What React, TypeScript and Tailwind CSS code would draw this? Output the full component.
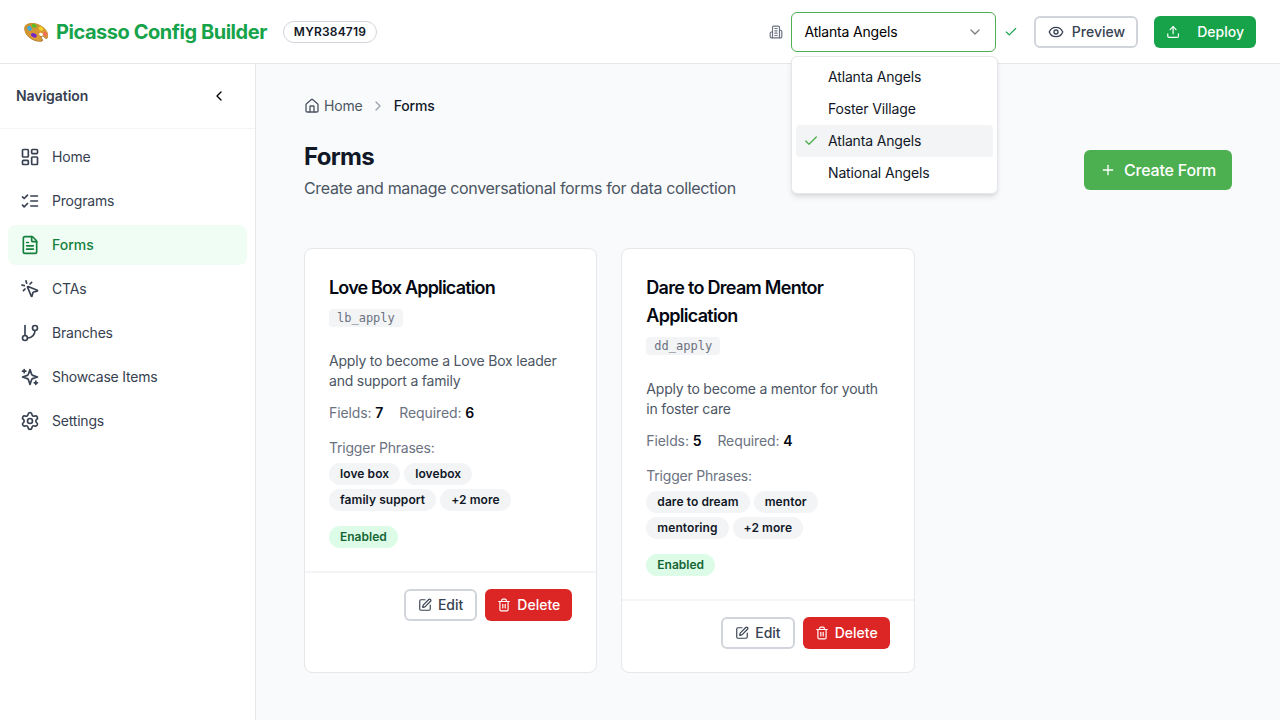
import React from "react";
import { Check, ChevronDown, ChevronLeft, ChevronRight, Eye, FileText, House, LayoutDashboard, MousePointerClick, Plus, Settings, SquarePen, Trash2, Upload } from "lucide-react";

type IconProps = { className?: string };

function Glyph({ className, children }: { className?: string; children: React.ReactNode }) {
  return (
    <svg viewBox="0 0 24 24" fill="none" stroke="currentColor" strokeWidth="2" strokeLinecap="round" strokeLinejoin="round" className={className}>
      {children}
    </svg>
  );
}

const Building = ({ className }: IconProps) => (
  <Glyph className={className}>
    <path d="M6 22V4a2 2 0 0 1 2-2h8a2 2 0 0 1 2 2v18Z" />
    <path d="M6 12H4a2 2 0 0 0-2 2v6a2 2 0 0 0 2 2h2" />
    <path d="M18 9h2a2 2 0 0 1 2 2v9a2 2 0 0 1-2 2h-2" />
    <path d="M10 6h4M10 10h4M10 14h4M10 18h4" />
  </Glyph>
);

const Checklist = ({ className }: IconProps) => (
  <Glyph className={className}>
    <path d="m3 17 2 2 4-4" />
    <path d="m3 7 2 2 4-4" />
    <path d="M13 6h8M13 12h8M13 18h8" />
  </Glyph>
);

const Branch = ({ className }: IconProps) => (
  <Glyph className={className}>
    <path d="M6 3v12" />
    <circle cx="18" cy="6" r="3" />
    <circle cx="6" cy="18" r="3" />
    <path d="M18 9a9 9 0 0 1-9 9" />
  </Glyph>
);

const Sparkles = ({ className }: IconProps) => (
  <Glyph className={className}>
    <path d="m12 3-1.912 5.813a2 2 0 0 1-1.275 1.275L3 12l5.813 1.912a2 2 0 0 1 1.275 1.275L12 21l1.912-5.813a2 2 0 0 1 1.275-1.275L21 12l-5.813-1.912a2 2 0 0 1-1.275-1.275L12 3Z" />
    <path d="M5 3v4M19 17v4M3 5h4M17 19h4" />
  </Glyph>
);

const Palette = () => (
  <svg viewBox="0 0 25 21" className="mt-px h-[21px] w-[25px]">
    <defs>
      <linearGradient id="wood" x1="0" y1="0" x2="0.6" y2="1">
        <stop offset="0" stopColor="#c98d2c" />
        <stop offset="1" stopColor="#dd9f38" />
      </linearGradient>
    </defs>
    <path d="M.4 6.500C.7 2.900 4.500 1.200 9 1.500c6.500.4 12.900 4.800 14.700 10 .9 2.900.2 5.500-1.600 5.300-1.500-.2-1.700-2.100-3.300-2.300-1.500-.1-1.300 1.400-.3 2.500 1.200 1.500.1 2.800-2.300 2.800C8.800 19.800 0 13.400.4 6.500Z" fill="#a5702b" />
    <path d="M.4 6C.7 2.400 4.500.7 9 1c6.500.4 12.900 4.800 14.700 9.800.9 2.900.2 5.300-1.600 5.100-1.700-.2-2.200-2.600-4.200-2.700-1.900 0-1.700 2-.4 3.400 1.200 1.400.1 2.400-1.800 2.400C8.800 19 0 12.900.4 6Z" fill="url(#wood)" />
    <ellipse cx="17" cy="12.400" rx="2" ry="1.500" transform="rotate(30 17 12.400)" fill="#ffffff" />
    <ellipse cx="10.300" cy="3.900" rx="2.600" ry="1.700" transform="rotate(15 10.300 3.900)" fill="#55bd27" />
    <ellipse cx="5.500" cy="6.400" rx="2.100" ry="2.600" transform="rotate(-35 5.500 6.400)" fill="#35aee5" />
    <ellipse cx="17" cy="6.700" rx="2.500" ry="1.800" transform="rotate(32 17 6.700)" fill="#f1d32c" />
    <ellipse cx="21.200" cy="12" rx="2.300" ry="1.900" transform="rotate(48 21.200 12)" fill="#f0705a" />
    <ellipse cx="9.900" cy="13.300" rx="3" ry="2" transform="rotate(25 9.900 13.300)" fill="#7526c9" />
  </svg>
);

const navItems = [
  { label: "Home", icon: LayoutDashboard },
  { label: "Programs", icon: Checklist },
  { label: "Forms", icon: FileText, active: true },
  { label: "CTAs", icon: MousePointerClick },
  { label: "Branches", icon: Branch },
  { label: "Showcase Items", icon: Sparkles },
  { label: "Settings", icon: Settings },
];

const tenants = [
  { name: "Atlanta Angels" },
  { name: "Foster Village" },
  { name: "Atlanta Angels", selected: true },
  { name: "National Angels" },
];

const forms = [
  {
    title: "Love Box Application",
    titleTracking: "tracking-[-0.83px]",
    id: "lb_apply",
    description: "Apply to become a Love Box leader and support a family",
    fields: 7,
    required: 6,
    phrases: ["love box", "lovebox", "family support", "+2 more"],
  },
  {
    title: "Dare to Dream Mentor Application",
    titleTracking: "tracking-[-0.72px]",
    id: "dd_apply",
    description: "Apply to become a mentor for youth in foster care",
    fields: 5,
    required: 4,
    phrases: ["dare to dream", "mentor", "mentoring", "+2 more"],
  },
];

function Header() {
  return (
    <header className="flex h-16 shrink-0 items-center justify-between border-b border-[#e5e7eb] bg-white px-6">
      <div className="flex items-center gap-4">
        <div className="flex items-center gap-[7px]">
          <Palette />
          <h1 className="text-xl font-bold tracking-[-0.46px] text-[#16a34a]">Picasso Config Builder</h1>
        </div>
        <span className="rounded-full border border-[#d1d5db] px-2.5 py-0.5 text-xs leading-4 font-semibold tracking-[0.2px] text-[#111827]">MYR384719</span>
      </div>
      <div className="flex items-center gap-4">
        <div className="flex items-center gap-2">
          <Building className="size-3.5 text-[#6b7280]" />
          <div className="relative">
            <button className="flex h-10 w-[205.500px] items-center justify-between rounded-md border border-[#4caf50] bg-white pr-3 pl-[13px] text-sm tracking-[-0.18px] text-black">
              Atlanta Angels
              <ChevronDown className="size-4 opacity-50" />
            </button>
            <ul className="absolute top-[44px] left-0 z-10 w-[207px] rounded-md border border-[#e5e7eb] bg-white p-1 shadow-md">
              {tenants.map((t, i) => (
                <li key={i} className={`flex h-8 items-center gap-[9px] rounded-sm pl-[7.500px] text-sm tracking-[-0.15px] text-[#111827] ${t.selected ? "bg-[#f3f4f6]" : ""}`}>
                  <span className="flex w-4 justify-center">{t.selected && <Check className="size-4 text-[#4caf50]" />}</span>
                  <span>{t.name}</span>
                </li>
              ))}
            </ul>
          </div>
          <Check className="size-3.5 text-[#16a34a]" />
        </div>
        <button className="flex h-8 w-[104px] items-center justify-center gap-2 rounded-md border-2 border-[#d1d5db] bg-white pl-px text-sm font-[450] text-[#374151]">
          <Eye className="size-4" />
          Preview
        </button>
        <button className="flex h-8 w-[102px] items-center rounded-md bg-[#16a34a] px-3 text-sm font-[450] text-white">
          <Upload className="mr-[17px] size-4" />
          Deploy
        </button>
      </div>
    </header>
  );
}

function Sidebar() {
  return (
    <aside className="flex w-64 shrink-0 flex-col border-r border-[#e5e7eb] bg-white">
      <div className="flex h-[65px] items-center justify-between border-b border-[#f3f4f6] px-4">
        <h2 className="text-sm font-semibold tracking-[-0.05px] text-[#374151]">Navigation</h2>
        <button className="flex size-10 items-center justify-center text-black">
          <ChevronLeft className="size-4" />
        </button>
      </div>
      <nav className="flex flex-col gap-1 p-2">
        {navItems.map(({ label, icon: Icon, active }) => (
          <a key={label} className={`flex h-10 items-center gap-3 rounded-lg px-3 text-sm ${active ? "bg-[#f0fdf4] font-medium text-[#15803d]" : "tracking-[-0.2px] text-[#374151]"}`}>
            <Icon className="size-5" />
            {label}
          </a>
        ))}
      </nav>
    </aside>
  );
}

function FormCard({ form }: { form: (typeof forms)[number] }) {
  return (
    <article className="rounded-lg border border-[#e5e7eb] bg-white">
      <div className="px-6 pt-[25px] pb-6">
        <h3 className={`text-lg leading-7 font-semibold text-[#030712] ${form.titleTracking}`}>{form.title}</h3>
        <div className="mt-[7px] flex">
          <code className="rounded bg-[#f3f4f6] px-2 py-px font-['DejaVu_Sans_Mono',monospace] text-xs text-[#6b7280]">{form.id}</code>
        </div>
      </div>
      <div className="flex flex-col px-6 pb-[23px]">
        <p className="text-sm leading-5 tracking-[-0.2px] text-[#4b5563]">{form.description}</p>
        <div className="mt-3 flex gap-4 text-sm tracking-[-0.1px] text-[#6b7280]">
          <span>Fields: <b className="font-semibold text-[#030712]">{form.fields}</b></span>
          <span>Required: <b className="font-semibold text-[#030712]">{form.required}</b></span>
        </div>
        <p className="mt-[15px] text-sm tracking-[-0.22px] text-[#6b7280]">Trigger Phrases:</p>
        <div className="mt-[5px] flex flex-wrap gap-1 pr-10">
          {form.phrases.map((p) => (
            <span key={p} className="rounded-full border border-transparent bg-[#f3f4f6] px-2.5 py-0.5 text-xs font-semibold tracking-[0.08px] text-[#111827]">{p}</span>
          ))}
        </div>
        <span className="mt-[15px] self-start rounded-full border border-transparent bg-[#dcfce7] px-2.5 py-0.5 text-xs font-semibold text-[#166534]">Enabled</span>
      </div>
      <div className="flex justify-end gap-2 border-t-2 border-[#f3f4f6] px-6 pt-4 pb-[23px]">
        <button className="flex h-8 w-[73.500px] items-center justify-center gap-1.5 rounded-md border-2 border-[#d1d5db] bg-white text-sm font-[450] text-[#374151]">
          <SquarePen className="size-3.5" />
          Edit
        </button>
        <button className="flex h-8 w-[87px] items-center justify-center gap-1.5 rounded-md bg-[#dc2626] text-sm font-[450] text-white">
          <Trash2 className="size-3.5" />
          Delete
        </button>
      </div>
    </article>
  );
}

export default function App() {
  return (
    <div className="flex h-screen flex-col overflow-hidden bg-[#f9fafb] font-['Inter',sans-serif]">
      <Header />
      <div className="flex min-h-0 flex-1">
        <Sidebar />
        <main className="flex-1 px-12 pt-8">
          <nav className="flex h-5 items-center text-sm tracking-[-0.15px]">
            <House className="mr-1 size-4 text-[#4b5563]" />
            <span className="text-[#4b5563]">Home</span>
            <ChevronRight className="mx-[7.500px] size-4 text-[#9ca3af]" />
            <span className="font-medium text-[#111827]">Forms</span>
          </nav>
          <div className="mt-6 flex items-center justify-between">
            <div>
              <h1 className="pt-px text-2xl leading-8 font-bold tracking-[-0.7px] text-[#111827]">Forms</h1>
              <p className="mt-[3px] text-base tracking-[-0.35px] text-[#4b5563]">Create and manage conversational forms for data collection</p>
            </div>
            <button className="flex h-10 w-[148px] items-center gap-2 rounded-md bg-[#4caf50] px-4 text-base font-[450] tracking-[-0.2px] whitespace-nowrap text-white">
              <Plus className="size-4 shrink-0" />
              Create Form
            </button>
          </div>
          <div className="mt-12 grid grid-cols-3 gap-6">
            {forms.map((f) => (
              <FormCard key={f.id} form={f} />
            ))}
          </div>
        </main>
      </div>
    </div>
  );
}
